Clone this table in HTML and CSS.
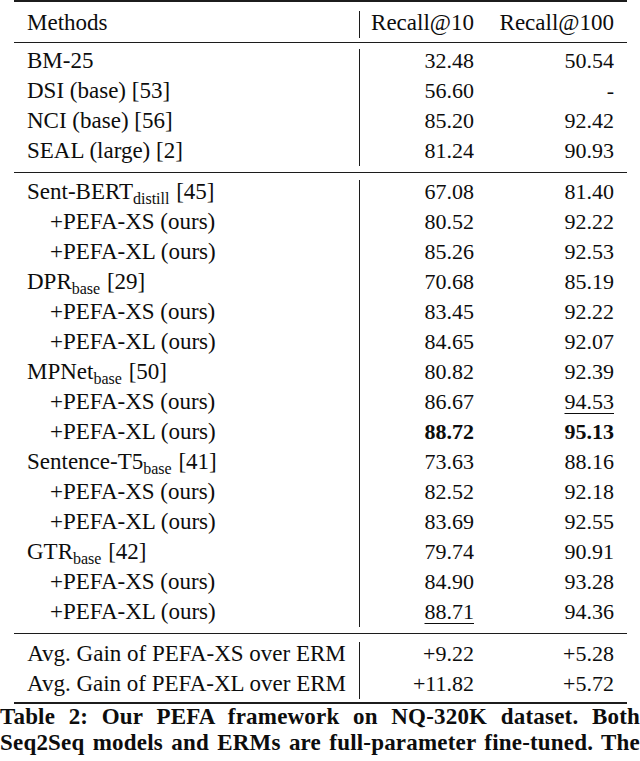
FILE: index.html
```html
<!DOCTYPE html>
<html lang="en">
<head>
<meta charset="utf-8">
<title>Table 2</title>
<link rel="stylesheet" href="styles.css">
</head>
<body>
<div class="table">
  <div class="sec sec-head">
    <div class="row">
      <div class="c1">Methods</div><div class="c2 head">Recall@10</div><div class="c3 head">Recall@100</div>
    </div>
  </div>
  <div class="sec sec-a">
    <div class="row"><div class="c1">BM-25</div><div class="c2">32.48</div><div class="c3">50.54</div></div>
    <div class="row"><div class="c1">DSI (base) [53]</div><div class="c2">56.60</div><div class="c3">-</div></div>
    <div class="row"><div class="c1">NCI (base) [56]</div><div class="c2">85.20</div><div class="c3">92.42</div></div>
    <div class="row"><div class="c1">SEAL (large) [2]</div><div class="c2">81.24</div><div class="c3">90.93</div></div>
  </div>
  <div class="sec sec-b">
    <div class="row"><div class="c1">Sent-BERT<sub class="sub">distill</sub> [45]</div><div class="c2">67.08</div><div class="c3">81.40</div></div>
    <div class="row"><div class="c1 ind">+PEFA-XS (ours)</div><div class="c2">80.52</div><div class="c3">92.22</div></div>
    <div class="row"><div class="c1 ind">+PEFA-XL (ours)</div><div class="c2">85.26</div><div class="c3">92.53</div></div>
    <div class="row"><div class="c1">DPR<sub class="sub">base</sub> [29]</div><div class="c2">70.68</div><div class="c3">85.19</div></div>
    <div class="row"><div class="c1 ind">+PEFA-XS (ours)</div><div class="c2">83.45</div><div class="c3">92.22</div></div>
    <div class="row"><div class="c1 ind">+PEFA-XL (ours)</div><div class="c2">84.65</div><div class="c3">92.07</div></div>
    <div class="row"><div class="c1">MPNet<sub class="sub">base</sub> [50]</div><div class="c2">80.82</div><div class="c3">92.39</div></div>
    <div class="row"><div class="c1 ind">+PEFA-XS (ours)</div><div class="c2">86.67</div><div class="c3"><span class="ul">94.53</span></div></div>
    <div class="row"><div class="c1 ind">+PEFA-XL (ours)</div><div class="c2"><b class="best">88.72</b></div><div class="c3"><b class="best">95.13</b></div></div>
    <div class="row"><div class="c1">Sentence-T5<sub class="sub">base</sub> [41]</div><div class="c2">73.63</div><div class="c3">88.16</div></div>
    <div class="row"><div class="c1 ind">+PEFA-XS (ours)</div><div class="c2">82.52</div><div class="c3">92.18</div></div>
    <div class="row"><div class="c1 ind">+PEFA-XL (ours)</div><div class="c2">83.69</div><div class="c3">92.55</div></div>
    <div class="row"><div class="c1">GTR<sub class="sub">base</sub> [42]</div><div class="c2">79.74</div><div class="c3">90.91</div></div>
    <div class="row"><div class="c1 ind">+PEFA-XS (ours)</div><div class="c2">84.90</div><div class="c3">93.28</div></div>
    <div class="row"><div class="c1 ind">+PEFA-XL (ours)</div><div class="c2"><span class="ul">88.71</span></div><div class="c3">94.36</div></div>
  </div>
  <div class="sec sec-c">
    <div class="row"><div class="c1 center">Avg. Gain of PEFA-XS over ERM</div><div class="c2">+9.22</div><div class="c3">+5.28</div></div>
    <div class="row"><div class="c1 center">Avg. Gain of PEFA-XL over ERM</div><div class="c2">+11.82</div><div class="c3">+5.72</div></div>
  </div>
</div>
<p class="caption"><span class="cap-line">Table 2: Our PEFA framework on NQ-320K dataset. Both</span><span class="cap-line">Seq2Seq models and ERMs are full-parameter fine-tuned. The</span></p>
</body>
</html>
```
FILE: styles.css
```css
html, body {
  margin: 0;
  padding: 0;
  background: #ffffff;
}
body {
  font-family: "Liberation Serif", "Times New Roman", serif;
  font-size: 23px;
  color: #0d0d0d;
  width: 640px;
  overflow: hidden;
}
.table {
  margin-left: 14px;
  width: 613px;
  border-top: 2px solid #1c1c1c;
  border-bottom: 2px solid #1c1c1c;
}
.sec + .sec {
  border-top: 1px solid #1c1c1c;
}
.sec-head { padding: 6px 0 4px; }
.sec-a { padding: 3px 0 6px; }
.sec-b { padding: 4px 0 6px; }
.sec-c { padding: 5px 0 3px; }

.row {
  display: grid;
  grid-template-columns: 346px 126px 141px;
  line-height: 30px;
  white-space: nowrap;
}
.row:first-child > div {
  margin-top: 3px;
  line-height: 24px;
  padding-bottom: 3px;
}
.c1 {
  padding-left: 13px;
  border-right: 1px solid #1c1c1c;
}
.c1.ind { padding-left: 36px; }
.c1.center { padding-left: 0; text-align: center; }
.c2 {
  text-align: right;
  padding-right: 12px;
  font-size: 22px;
}
.c3 {
  text-align: right;
  padding-right: 13px;
  font-size: 22px;
}
.c2.head, .c3.head { font-size: 23px; }
.sub {
  font-size: 16px;
  line-height: 0;
  vertical-align: -5px;
  margin-right: 1px;
}
.best { font-weight: bold; }
.ul {
  text-decoration: underline;
  text-decoration-thickness: 1px;
  text-underline-offset: 4px;
}
.caption {
  margin: 0;
  width: 640px;
  font-weight: bold;
  font-size: 23px;
  line-height: 26px;
  letter-spacing: 0.2px;
}
.cap-line {
  display: block;
  text-align: justify;
  text-align-last: justify;
}
```
